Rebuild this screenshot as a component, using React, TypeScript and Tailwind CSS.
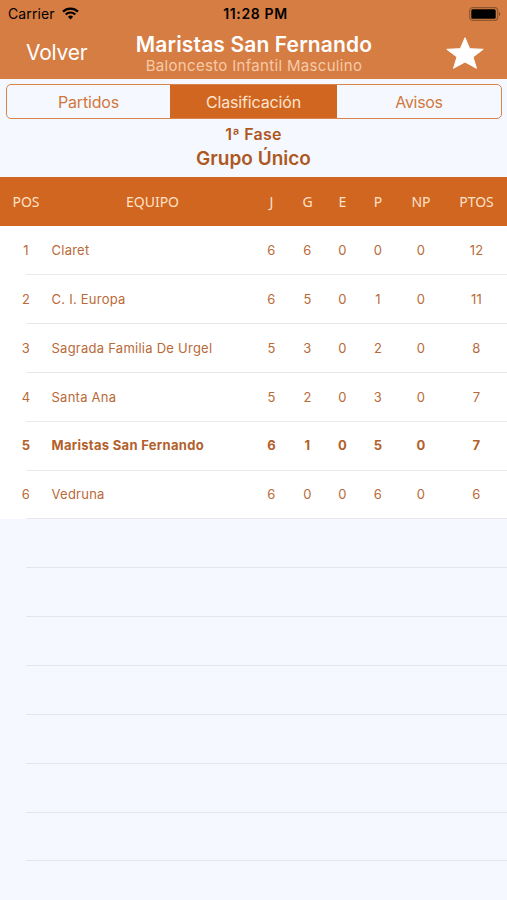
import React from "react";

const COLUMNS = "grid grid-cols-[52px_201px_37px_35px_35px_36px_50px_61px] items-center";

const headings = ["POS", "EQUIPO", "J", "G", "E", "P", "NP", "PTOS"];

const teams = [
  { name: "Claret", stats: [6, 6, 0, 0, 0, 12] },
  { name: "C. I. Europa", stats: [6, 5, 0, 1, 0, 11] },
  { name: "Sagrada Familia De Urgel", stats: [5, 3, 0, 2, 0, 8] },
  { name: "Santa Ana", stats: [5, 2, 0, 3, 0, 7] },
  { name: "Maristas San Fernando", stats: [6, 1, 0, 5, 0, 7], own: true },
  { name: "Vedruna", stats: [6, 0, 0, 6, 0, 6] },
];

const StatusBar = () => (
  <div className="grid h-[27px] grid-cols-3 items-center pl-[8px] pr-[6px] text-black">
    <div className="flex items-center gap-[7px]">
      <span className="text-[14px] leading-5 tracking-[0.1px]">Carrier</span>
      <svg className="h-[13px] w-[17px]" viewBox="0 0 17 13" fill="none" stroke="currentColor">
        <path d="M1 4.6a10.8 10.8 0 0 1 15 0" strokeWidth="2.2" />
        <path d="M3.7 7.5a6.9 6.9 0 0 1 9.6 0" strokeWidth="2.1" />
        <path d="M8.5 12.4 5.9 9.8a3.8 3.8 0 0 1 5.2 0z" fill="currentColor" stroke="none" />
      </svg>
    </div>
    <span className="whitespace-nowrap pl-[2px] text-center text-[14px] font-semibold leading-5 tracking-[0.65px]">
      11:28 PM
    </span>
    <svg className="h-[14px] w-[32px] justify-self-end" viewBox="0 0 32 14">
      <rect x="0.7" y="0.7" width="28" height="12.6" rx="3" fill="none" stroke="#8f5730" strokeWidth="1.2" />
      <rect x="2.3" y="2.3" width="24.4" height="9.4" rx="1.5" fill="#000" />
      <path d="M30 5v4c1.6-.5 1.6-3.5 0-4z" fill="#7d4b29" />
    </svg>
  </div>
);

const Navbar = () => (
  <header className="h-[79px] bg-[#d67d43]">
    <StatusBar />
    <div className="grid h-[52px] grid-cols-[114px_1fr_114px] text-white">
      <button className="flex h-[51px] items-center pl-[26px] text-[21px] tracking-[-0.2px]">
        Volver
      </button>
      <div className="whitespace-nowrap pl-[1px] pt-[6px] text-center">
        <h1 className="text-[21px] font-semibold leading-[24px] tracking-[0.13px]">
          Maristas San Fernando
        </h1>
        <p className="text-[15px] leading-[18px] tracking-[0.32px] text-[#f7caa9]">
          Baloncesto Infantil Masculino
        </p>
      </div>
      <button className="flex h-[52px] items-center justify-end pr-[22px]" aria-label="Favorito">
        <svg className="h-[34px] w-[40px]" viewBox="0 0 40 34" fill="currentColor">
          <path
            d="M20 1.7 24.7 12.7 38.2 13.3 28 21 31.5 32.3 20 26 8.5 32.3 12 21 1.8 13.3 15.3 12.7Z"
            stroke="currentColor"
            strokeWidth="1"
            strokeLinejoin="round"
          />
        </svg>
      </button>
    </div>
  </header>
);

const Tabs = () => (
  <div className="pl-[6px] pr-[5px] pt-[5px]">
    <div className="grid h-[35px] grid-cols-[163px_167px_1fr] overflow-hidden rounded-[5px] border-[1.5px] border-[#d9834d] text-[16px] tracking-[-0.15px] text-[#d2773c]">
      <button>Partidos</button>
      <button className="bg-[#d06620] text-[#ffe5cf]">Clasificación</button>
      <button className="tracking-[-0.3px]">Avisos</button>
    </div>
  </div>
);

export default function App() {
  return (
    <div className="h-[900px] w-[507px] overflow-hidden bg-[#f5f8ff] font-['Inter','Liberation_Sans',sans-serif]">
      <Navbar />
      <Tabs />
      <div className="h-[58px] pt-[5px] text-center font-semibold text-[#ad581f]">
        <p className="text-[16px] leading-[21px] tracking-[0.2px]">1ª Fase</p>
        <h2 className="text-[19px] leading-[28px]">Grupo Único</h2>
      </div>

      <div
        className={`${COLUMNS} h-[49.4px] bg-[#d06620] pb-[0.4px] text-center font-['Noto_Sans',sans-serif] text-[14px] text-[#ffe1c8]`}
      >
        {headings.map((heading) => (
          <span key={heading}>{heading}</span>
        ))}
      </div>

      {teams.map((team, i) => (
        <div key={team.name} className="h-[48.85px] bg-white">
          <div
            className={`${COLUMNS} h-[48.85px] text-center text-[13px] ${
              team.own ? "font-bold tracking-[0.3px] text-[#b3602b]" : "tracking-[0.25px] text-[#b96a38]"
            }`}
          >
            <span>{i + 1}</span>
            <span className="-ml-[0.5px] whitespace-nowrap text-left">{team.name}</span>
            {team.stats.map((value, j) => (
              <span key={j}>{value}</span>
            ))}
          </div>
          <div className="-mt-px ml-[26px] h-px bg-[#e9e9ec]" />
        </div>
      ))}

      {Array.from({ length: 7 }, (_, i) => (
        <div key={i} className="flex h-[48.85px] flex-col justify-end pl-[26px]">
          <div className="h-px bg-[#e1e5ef]" />
        </div>
      ))}
    </div>
  );
}
